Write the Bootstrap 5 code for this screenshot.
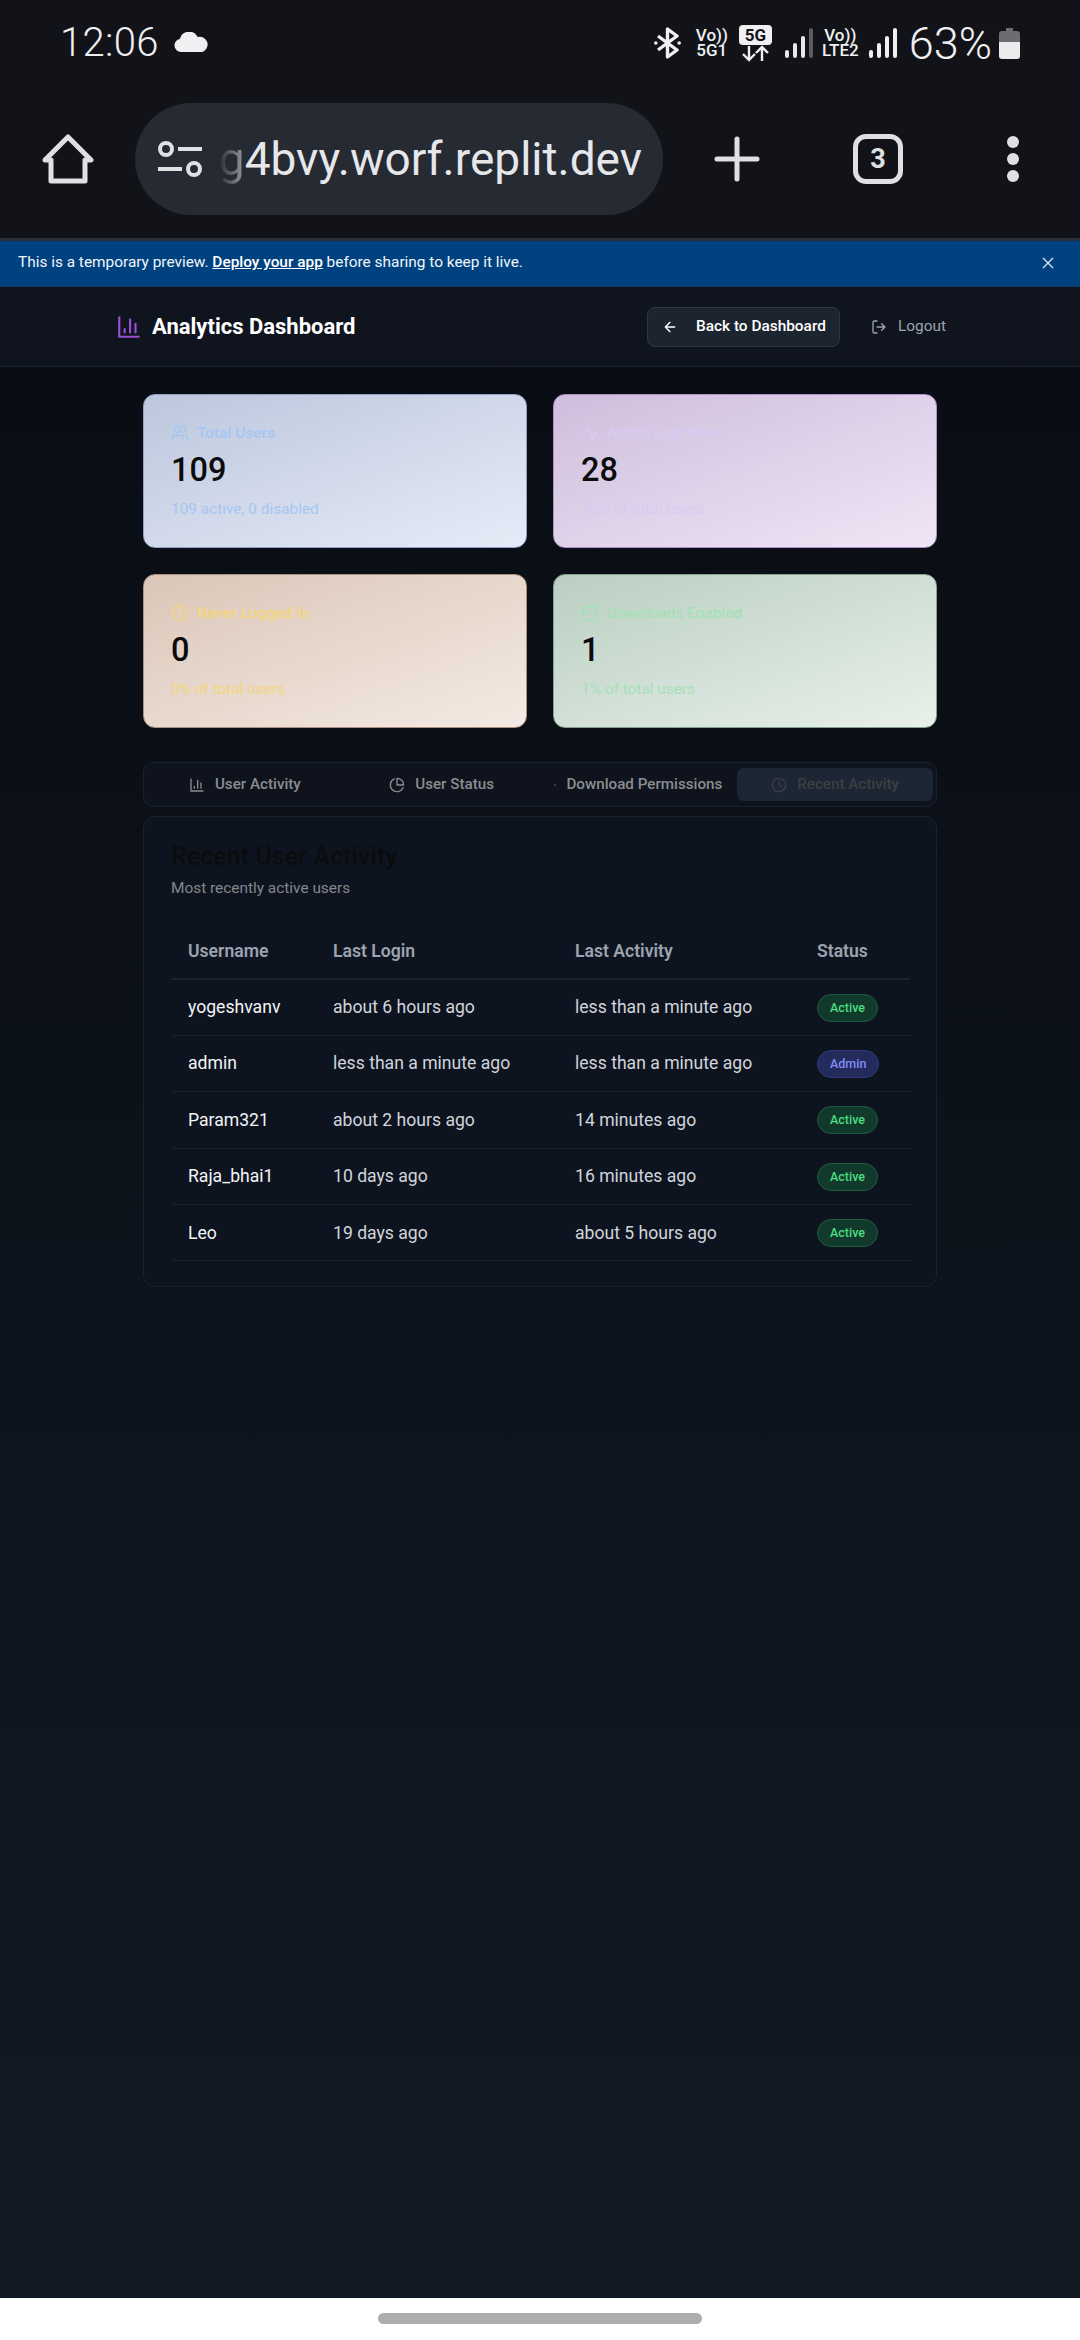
<!DOCTYPE html>
<html lang="en">
<head>
  <meta charset="UTF-8" />
  <meta name="viewport" content="width=device-width, initial-scale=1.0" />
  <title>Analytics Dashboard</title>
  <link href="https://cdn.jsdelivr.net/npm/bootstrap@5.3.0/dist/css/bootstrap.min.css" rel="stylesheet" />
  <style>
    html, body { height: 100%; }
    body {
      width: 1080px;
      height: 2340px;
      overflow: hidden;
      font-family: Roboto, "Liberation Sans", sans-serif;
      background: #fff;
      display: flex;
      flex-direction: column;
    }
    svg { display: block; flex: none; }
    .lu { fill: none; stroke: currentColor; stroke-width: 2; stroke-linecap: round; stroke-linejoin: round; }

    /* phone chrome */
    .chrome { background: #111318; color: #f0f0f2; height: 238px; flex: none; }
    .status-row { height: 86px; padding: 0 60px 0 60px; }
    .clock { font-size: 40px; font-weight: 300; line-height: 1; width: 100px; letter-spacing: .3px; }
    .cloud { margin-left: 14px; margin-top: -2px; }
    .net { font-size: 17px; font-weight: 500; line-height: 15.5px; text-align: center; color: #f0f0f2; white-space: nowrap; }
    .net-one { width: 32px; margin-left: 15px; }
    .net-two { width: 39px; margin-left: 8px; }
    .net-wrap { width: 33px; margin-left: 11px; margin-right: 13px; }
    .net-box { background: #f0f0f2; color: #111318; border-radius: 4px; font-size: 17px; font-weight: 700; line-height: 20px; width: 33px; }
    .pct { font-size: 45px; font-weight: 300; line-height: 1; margin-left: 12px; margin-right: 7px; }
    .sig-two { margin-left: 9px; }
    .toolbar { height: 146px; padding-left: 42px; }
    .url-pill { width: 528px; height: 112px; background: #252a33; border-radius: 56px; margin-left: 41px; margin-right: 51px; padding: 0 21px 0 23px; }
    .url-text { font-size: 46px; font-weight: 400; line-height: 1; color: #e6e7ea; white-space: nowrap; margin-left: auto; }
    .url-fade { background: linear-gradient(90deg, #2a2f38, #9a9da3); -webkit-background-clip: text; background-clip: text; color: transparent; }
    .tab-count { width: 50px; height: 50px; border: 5px solid #dfe0e3; border-radius: 13px; margin-left: 93px; font-size: 27px; font-weight: 700; line-height: 1; color: #dfe0e3; }
    .dots { margin-left: 104px; }

    /* replit banner */
    .preview-bar { height: 49px; flex: none; background: #00417f; border-top: 3px solid #2b3038; border-bottom: 1px solid #0f3560; padding: 0 18px 2px; color: #f2f6fb; font-size: 15.4px; }
    .preview-bar a { color: #fff; font-weight: 500; }

    /* page */
    .page { flex: 1 1 auto; background: linear-gradient(180deg, #090c13 0%, #111a24 100%); }
    .top-head { height: 80px; background: #10141f; border-bottom: 1px solid #1b2230; padding: 0 134px 0 116px; }
    .brand-icon { color: #9a4fd0; }
    .brand-name { font-size: 22px; font-weight: 700; color: #fff; margin-left: 10px; line-height: 1; }
    .back-btn { height: 40px; width: 193px; background: #1c2430; border: 1px solid #2e3744; border-radius: 8px; color: #fff; font-size: 15.4px; font-weight: 500; padding: 1px 0 0 14px; gap: 18px; white-space: nowrap; }
    .back-btn:hover { background: #1c2430; color: #fff; }
    .logout-link { color: #9ca3af; font-size: 15.4px; margin-left: 31px; margin-top: 1px; gap: 11px; }
    .wrap { width: 794px; margin: 27px 0 0 143px; }
    .stat-grid { display: grid; grid-template-columns: 384px 384px; gap: 26px; }
    .stat-card { height: 154px; border-radius: 12px; padding: 0 27px; border-width: 1px; border-style: solid; justify-content: center; }
    .stat-label { font-size: 15.4px; font-weight: 500; line-height: 18px; gap: 8px; }
    .stat-num { font-size: 32.5px; font-weight: 500; line-height: 38px; color: #0b0b0d; margin: 9px 0 10px; }
    .stat-sub { font-size: 15.4px; line-height: 20px; }
    .s-blue { background: linear-gradient(160deg, #bcc7dd, #e6ebf7); border-color: #8fa1c6; color: #a5c6f3; }
    .s-purple { background: linear-gradient(160deg, #cfbedc, #f0e5f6); border-color: #ac93c6; color: #d9cbf3; }
    .s-orange { background: linear-gradient(160deg, #dbc6b8, #f4eae3); border-color: #a9907f; color: #f3d67d; }
    .s-green { background: linear-gradient(160deg, #bacfc2, #e8f0ea); border-color: #84a08f; color: #a6e0b7; }
    .tab-strip { height: 45px; margin-top: 34px; background: #0e131d; border: 1px solid #1a2230; border-radius: 10px; padding: 5px 3px; display: grid; grid-template-columns: repeat(4, 1fr); gap: 1px; }
    .tab-item { color: #8b8d90; font-size: 15.2px; font-weight: 500; border-radius: 7px; gap: 10px; white-space: nowrap; padding: 0; }
    .tab-item:hover { color: #8b8d90; }
    .tab-item.is-on { background: #1c2634; color: #3c3e43; }
    .tiny-dot { width: 2px; height: 2px; border-radius: 50%; background: #4a4d52; }
    .panel { height: 471px; margin-top: 9px; background: #0e141f; border: 1px solid #1b2330; border-radius: 12px; padding: 0 26px 0 27px; }
    .panel-title { font-size: 25px; font-weight: 600; line-height: 30px; color: #0a0c10; margin: 25px 0 0; }
    .panel-sub { font-size: 15.4px; line-height: 20px; color: #85878a; margin: 6px 0 0; }
    .data-table { --bs-table-bg: transparent; --bs-table-color: #d1d5db; --bs-table-border-color: #1a2230; margin: 27px 0 0; table-layout: fixed; width: 739px; }
    .c-a { width: 145px; }
    .c-b { width: 242px; }
    .c-c { width: 110px; }
    .data-table th { color: #9ca3af; font-size: 17.6px; font-weight: 600; height: 54px; padding: 0 17px; vertical-align: middle; border-bottom: 2px solid #1a2230; }
    .data-table td { font-size: 17.6px; height: 56.4px; padding: 0 17px; vertical-align: middle; white-space: nowrap; }
    .data-table td.who { color: #f3f4f6; }
    .pill-tag { display: inline-block; font-size: 12.5px; font-weight: 500; line-height: 26px; height: 28px; padding: 0 12px; border-radius: 14px; border: 1px solid; vertical-align: middle; }
    .tag-active { background: #123a2c; border-color: #1e5a3f; color: #4ade80; }
    .tag-admin { background: #232a5c; border-color: #30387a; color: #818cf8; }

    .gesture-bar { height: 42px; flex: none; background: #fff; }
    .gesture-pill { width: 324px; height: 11px; border-radius: 6px; background: #adadad; margin-top: -2px; }
  </style>
</head>
<body>
  <div class="chrome">
    <div class="status-row d-flex align-items-center">
      <span class="clock">12:06</span>
      <svg class="cloud" width="35" height="20" viewBox="0 0 35 20"><path fill="#f0f0f2" d="M7 20a6.5 6.5 0 0 1-1.2-12.9A9.5 9.5 0 0 1 23.6 5 7.5 7.5 0 0 1 28 20z"/></svg>
      <div class="ms-auto d-flex align-items-center">
        <svg width="27" height="32" viewBox="0 0 27 32"><path fill="none" stroke="#f0f0f2" stroke-width="3.4" stroke-linejoin="round" d="M4 9l19 14-9.500 7V2l9.500 7L4 23"/><circle cx="1.800" cy="16" r="1.800" fill="#f0f0f2"/><circle cx="25.200" cy="16" r="1.800" fill="#f0f0f2"/></svg>
        <div class="net net-one">Vo))<br>5G1</div>
        <div class="net-wrap">
          <div class="net net-box">5G</div>
          <svg width="33" height="17" viewBox="0 0 33 17"><path fill="none" stroke="#f0f0f2" stroke-width="2.400" d="M10 1v14M4 9l6 6 6-6M23 16V2M17 8l6-6 6 6"/></svg>
        </div>
        <svg width="28" height="30" viewBox="0 0 28 30"><g fill="#e8e8ea"><rect x="0" y="22" width="4" height="8" rx="2"/><rect x="8" y="15" width="4" height="15" rx="2"/><rect x="16" y="8" width="4" height="22" rx="2"/></g><rect x="24" y="0" width="4" height="30" rx="2" fill="#5a5c60"/></svg>
        <div class="net net-two">Vo))<br>LTE2</div>
        <svg class="sig-two" width="28" height="30" viewBox="0 0 28 30"><g fill="#f0f0f2"><rect x="0" y="22" width="4" height="8" rx="2"/><rect x="8" y="15" width="4" height="15" rx="2"/><rect x="16" y="8" width="4" height="22" rx="2"/><rect x="24" y="0" width="4" height="30" rx="2"/></g></svg>
        <span class="pct">63%</span>
        <svg width="21" height="31" viewBox="0 0 21 31"><path fill="#6b6d71" d="M7 0h7v3h4a3 3 0 0 1 3 3v8H0V6a3 3 0 0 1 3-3h4z"/><path fill="#ececed" d="M0 14h21v14a3 3 0 0 1-3 3H3a3 3 0 0 1-3-3z"/></svg>
      </div>
    </div>
    <div class="toolbar d-flex align-items-center">
      <svg width="52" height="50" viewBox="0 0 52 50"><path fill="none" stroke="#dfe0e3" stroke-width="5" stroke-linejoin="round" d="M26 3l23 23h-6v21H9V26H3z"/></svg>
      <div class="url-pill d-flex align-items-center">
        <svg width="44" height="36" viewBox="0 0 44 36"><g fill="none" stroke="#dfe0e3" stroke-width="4"><circle cx="8" cy="8" r="6"/><circle cx="36" cy="28" r="6"/><path d="M20 8h24M0 28h24"/></g></svg>
        <span class="url-text"><span class="url-fade">g</span>4bvy.worf.replit.dev</span>
      </div>
      <svg width="46" height="46" viewBox="0 0 46 46"><path fill="none" stroke="#dfe0e3" stroke-width="5" stroke-linecap="round" d="M23 3v40M3 23h40"/></svg>
      <div class="tab-count d-flex align-items-center justify-content-center">3</div>
      <svg class="dots" width="12" height="46" viewBox="0 0 12 46"><g fill="#dfe0e3"><circle cx="6" cy="6" r="6"/><circle cx="6" cy="23" r="6"/><circle cx="6" cy="40" r="6"/></g></svg>
    </div>
  </div>

  <div class="preview-bar d-flex align-items-center justify-content-between">
    <span>This is a temporary preview. <a href="#">Deploy your app</a> before sharing to keep it live.</span>
    <svg class="me-2" width="12" height="12" viewBox="0 0 12 12"><path stroke="#dce6f2" stroke-width="1.300" d="M1 1l10 10M11 1L1 11"/></svg>
  </div>

  <div class="page">
    <header class="top-head d-flex align-items-center">
      <svg class="lu brand-icon" width="26" height="26" viewBox="0 0 24 24"><path d="M3 3v18h18M18 17V9M13 17V5M8 17v-3"/></svg>
      <span class="brand-name">Analytics Dashboard</span>
      <button type="button" class="btn back-btn d-flex align-items-center ms-auto">
        <svg class="lu" width="16" height="16" viewBox="0 0 24 24"><path d="M12 19l-7-7 7-7M19 12H5"/></svg>
        Back to Dashboard
      </button>
      <a href="#" class="logout-link d-flex align-items-center text-decoration-none">
        <svg class="lu" width="16" height="16" viewBox="0 0 24 24"><path d="M9 21H5a2 2 0 0 1-2-2V5a2 2 0 0 1 2-2h4M16 17l5-5-5-5M21 12H9"/></svg>
        Logout
      </a>
    </header>

    <main class="wrap">
      <section class="stat-grid">
        <div class="stat-card s-blue d-flex flex-column">
          <div class="stat-label d-flex align-items-center">
            <svg class="lu" width="18" height="18" viewBox="0 0 24 24"><path d="M16 21v-2a4 4 0 0 0-4-4H6a4 4 0 0 0-4 4v2"/><circle cx="9" cy="7" r="4"/><path d="M22 21v-2a4 4 0 0 0-3-3.870M16 3.130a4 4 0 0 1 0 7.750"/></svg>
            Total Users
          </div>
          <div class="stat-num">109</div>
          <div class="stat-sub">109 active, 0 disabled</div>
        </div>
        <div class="stat-card s-purple d-flex flex-column">
          <div class="stat-label d-flex align-items-center">
            <svg class="lu" width="18" height="18" viewBox="0 0 24 24"><path d="M22 12h-4l-3 9L9 3l-3 9H2"/></svg>
            Active Last Week
          </div>
          <div class="stat-num">28</div>
          <div class="stat-sub">26% of total users</div>
        </div>
        <div class="stat-card s-orange d-flex flex-column">
          <div class="stat-label d-flex align-items-center">
            <svg class="lu" width="18" height="18" viewBox="0 0 24 24"><circle cx="12" cy="12" r="10"/><path d="M12 6v6l4 2"/></svg>
            Never Logged In
          </div>
          <div class="stat-num">0</div>
          <div class="stat-sub">0% of total users</div>
        </div>
        <div class="stat-card s-green d-flex flex-column">
          <div class="stat-label d-flex align-items-center">
            <svg class="lu" width="18" height="18" viewBox="0 0 24 24"><rect x="3" y="4" width="18" height="18" rx="2"/><path d="M16 2v4M8 2v4M3 10h18"/></svg>
            Downloads Enabled
          </div>
          <div class="stat-num">1</div>
          <div class="stat-sub">1% of total users</div>
        </div>
      </section>

      <nav class="tab-strip">
        <a href="#" class="tab-item d-flex align-items-center justify-content-center text-decoration-none">
          <svg class="lu" width="16" height="16" viewBox="0 0 24 24"><path d="M3 3v18h18M18 17V9M13 17V5M8 17v-3"/></svg>
          User Activity
        </a>
        <a href="#" class="tab-item d-flex align-items-center justify-content-center text-decoration-none">
          <svg class="lu" width="16" height="16" viewBox="0 0 24 24"><path d="M21.210 15.890A10 10 0 1 1 8 2.830"/><path d="M22 12A10 10 0 0 0 12 2v10z"/></svg>
          User Status
        </a>
        <a href="#" class="tab-item d-flex align-items-center justify-content-center text-decoration-none">
          <span class="tiny-dot"></span>Download Permissions
        </a>
        <a href="#" class="tab-item is-on d-flex align-items-center justify-content-center text-decoration-none">
          <svg class="lu" width="16" height="16" viewBox="0 0 24 24"><circle cx="12" cy="12" r="10"/><path d="M12 6v6l4 2"/></svg>
          Recent Activity
        </a>
      </nav>

      <section class="panel">
        <h2 class="panel-title">Recent User Activity</h2>
        <p class="panel-sub">Most recently active users</p>
        <table class="table data-table">
          <colgroup><col class="c-a"><col class="c-b"><col class="c-b"><col class="c-c"></colgroup>
          <thead>
            <tr><th>Username</th><th>Last Login</th><th>Last Activity</th><th>Status</th></tr>
          </thead>
          <tbody>
            <tr><td class="who">yogeshvanv</td><td>about 6 hours ago</td><td>less than a minute ago</td><td><span class="pill-tag tag-active">Active</span></td></tr>
            <tr><td class="who">admin</td><td>less than a minute ago</td><td>less than a minute ago</td><td><span class="pill-tag tag-admin">Admin</span></td></tr>
            <tr><td class="who">Param321</td><td>about 2 hours ago</td><td>14 minutes ago</td><td><span class="pill-tag tag-active">Active</span></td></tr>
            <tr><td class="who">Raja_bhai1</td><td>10 days ago</td><td>16 minutes ago</td><td><span class="pill-tag tag-active">Active</span></td></tr>
            <tr><td class="who">Leo</td><td>19 days ago</td><td>about 5 hours ago</td><td><span class="pill-tag tag-active">Active</span></td></tr>
          </tbody>
        </table>
      </section>
    </main>
  </div>

  <div class="gesture-bar d-flex align-items-center justify-content-center">
    <div class="gesture-pill"></div>
  </div>

  <script src="https://cdn.jsdelivr.net/npm/bootstrap@5.3.0/dist/js/bootstrap.bundle.min.js"></script>
</body>
</html>
